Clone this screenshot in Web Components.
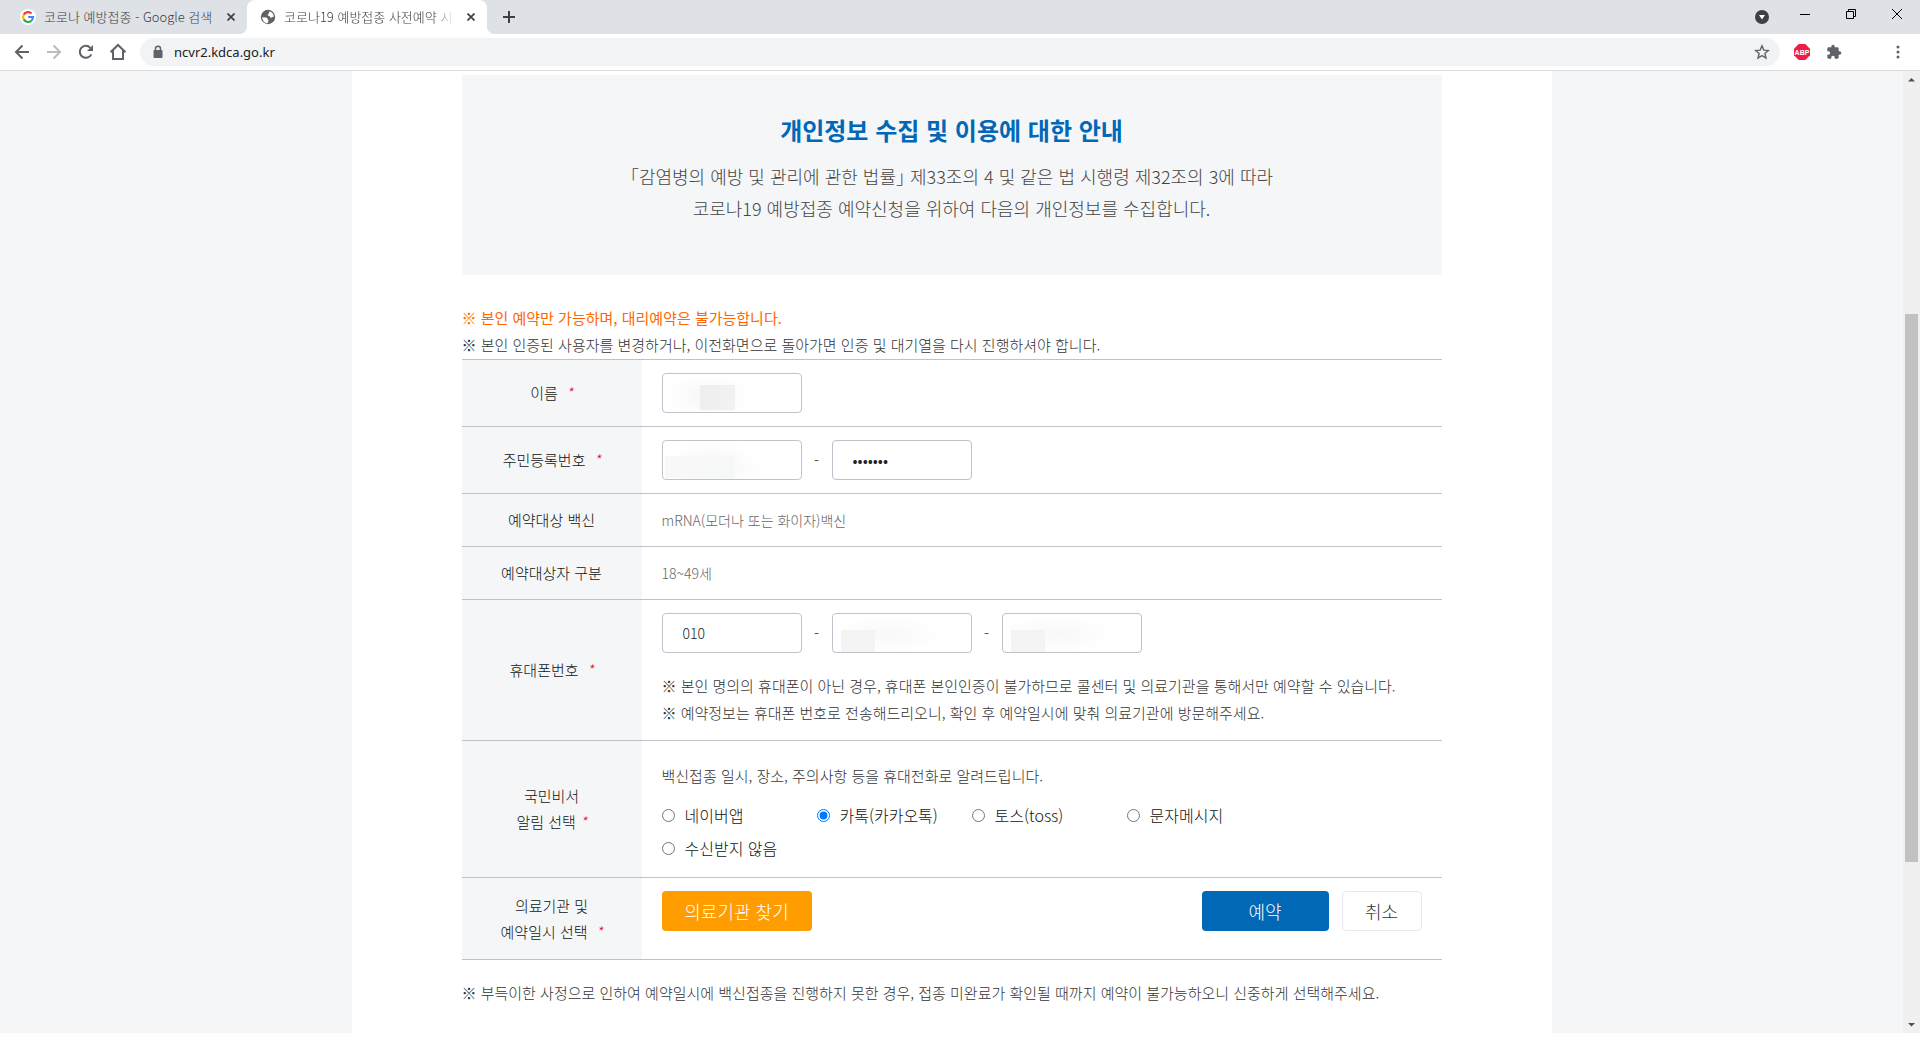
<!DOCTYPE html>
<html lang="ko">
<head>
<meta charset="utf-8">
<title>코로나19 예방접종 사전예약 시스템</title>
<style>
  body {
    margin: 0;
    font-family: "Noto Sans CJK KR", "Noto Sans", sans-serif;
    background: #fff;
  }
</style>
</head>
<body>
<browser-window>
  <browser-tab slot="tab" label="코로나 예방접종 - Google 검색">
    <svg slot="icon" width="16" height="16" viewBox="0 0 16 16">
      <circle cx="8" cy="8" r="8" fill="#fff"/>
      <g fill="none" stroke-width="2.2">
        <path d="M3.7 5.6A5 5 0 0 1 11.6 4.5" stroke="#ea4335"/>
        <path d="M3.7 10.4A5 5 0 0 1 3.7 5.6" stroke="#fbbc05"/>
        <path d="M11.4 11.7A5 5 0 0 1 3.7 10.4" stroke="#34a853"/>
        <path d="M8.2 8H13A5 5 0 0 1 11.4 11.7" stroke="#4285f4"/>
      </g>
    </svg>
  </browser-tab>
  <browser-tab slot="tab" label="코로나19 예방접종 사전예약 시스템" active>
    <svg slot="icon" width="16" height="16" viewBox="0 0 16 16">
      <circle cx="8" cy="8" r="7.2" fill="#5f6368"/>
      <path d="M2.2 8.2 6 8.6c1.3.2 1.8 1 1.6 2 1 .2 1 1.2.6 2.200l-.6 1.500C4.500 14 2.200 11.500 2.200 8.200zM9.300 2.300c2.500.600 4.300 2.600 4.500 5-.8 1.300-1.800.5-2.300 1.200-.6.700-1.500.2-1.600-.7-.1-1-1.300-.6-2-1.200-.5-.5-.2-1.200.4-1.400.9-.3.2-1.200.7-1.700.3-.3.6-.6.300-1.200z" fill="#fff"/>
    </svg>
  </browser-tab>
  <reservation-page>
    <notice-box slot="notice">
      <span slot="title">개인정보 수집 및 이용에 대한 안내</span>
      <span>「감염병의 예방 및 관리에 관한 법률」 제33조의 4 및 같은 법 시행령 제32조의 3에 따라<br>코로나19 예방접종 예약신청을 위하여 다음의 개인정보를 수집합니다.</span>
    </notice-box>
    <note-line slot="before" highlight>※ 본인 예약만 가능하며, 대리예약은 불가능합니다.</note-line>
    <note-line slot="before">※ 본인 인증된 사용자를 변경하거나, 이전화면으로 돌아가면 인증 및 대기열을 다시 진행하셔야 합니다.</note-line>
    <reservation-form></reservation-form>
    <note-line slot="after">※ 부득이한 사정으로 인하여 예약일시에 백신접종을 진행하지 못한 경우, 접종 미완료가 확인될 때까지 예약이 불가능하오니 신중하게 선택해주세요.</note-line>
  </reservation-page>
</browser-window>

<script>
class BrowserTab extends HTMLElement {
  constructor() {
    super();
    this.attachShadow({ mode: 'open' });
    this.shadowRoot.innerHTML = `
      <style>
        :host {
          display: flex;
          align-items: center;
          gap: 8px;
          box-sizing: border-box;
          width: 240px;
          height: 34px;
          padding: 0 8px 0 13px;
          position: relative;
          color: #3c4043;
        }
        :host([active]) {
          background: #fff;
          border-radius: 8px 8px 0 0;
        }
        /* flared feet of the active tab */
        :host([active])::before,
        :host([active])::after {
          content: "";
          position: absolute;
          bottom: 0;
          width: 8px;
          height: 8px;
        }
        :host([active])::before {
          left: -8px;
          background: radial-gradient(circle at 0 0, #dee1e6 8px, #fff 8px);
        }
        :host([active])::after {
          right: -8px;
          background: radial-gradient(circle at 100% 0, #dee1e6 8px, #fff 8px);
        }
        ::slotted(svg) { flex: none; }
        .title {
          flex: 1;
          overflow: hidden;
          white-space: nowrap;
          font-size: 13px;
          line-height: 18px;
          font-weight: 300;
        }
        :host([active]) .title {
          -webkit-mask-image: linear-gradient(to right, #000 88%, transparent);
          mask-image: linear-gradient(to right, #000 88%, transparent);
        }
        button {
          display: flex;
          flex: none;
          padding: 4px;
          border: 0;
          background: none;
        }
      </style>
      <slot name="icon"></slot>
      <span class="title"></span>
      <button type="button" aria-label="탭 닫기">
        <svg width="8" height="8" viewBox="0 0 8 8"><path d="M.5.5l7 7M7.5.5l-7 7" stroke="#3c4043" stroke-width="1.7"/></svg>
      </button>
    `;
  }

  connectedCallback() {
    this.shadowRoot.querySelector('.title').textContent = this.getAttribute('label') || '';
  }
}

class BrowserWindow extends HTMLElement {
  constructor() {
    super();
    this.attachShadow({ mode: 'open' });
    this.shadowRoot.innerHTML = `
      <style>
        :host {
          display: flex;
          flex-direction: column;
          box-sizing: border-box;
          min-height: 100vh;
          padding-bottom: 7px;
        }
        button {
          display: flex;
          align-items: center;
          justify-content: center;
          flex: none;
          width: 32px;
          height: 28px;
          padding: 0;
          border: 0;
          background: none;
        }
        .strip {
          display: flex;
          height: 34px;
          padding-left: 7px;
          background: #dee1e6;
        }
        .strip .new { width: 28px; height: 34px; margin-left: 8px; }
        .system { display: flex; margin-left: auto; }
        .system button { width: 46px; }
        .system .search { width: 40px; height: 34px; }
        .toolbar {
          display: flex;
          align-items: center;
          height: 36px;
          padding: 0 6px;
          border-bottom: 1px solid #d9dbdd;
        }
        .address {
          display: flex;
          align-items: center;
          flex: 1;
          height: 28px;
          margin: 0 6px;
          padding: 0 2px 0 12px;
          border-radius: 14px;
          background: #f1f3f4;
        }
        .address input {
          flex: 1;
          min-width: 0;
          margin-left: 10px;
          padding: 0;
          border: 0;
          outline: 0;
          background: none;
          color: #202124;
          font: 13px/20px "Noto Sans", sans-serif;
        }
        .menu { margin-left: 32px; }
        .view { display: flex; flex: 1; }
        .view ::slotted(reservation-page) { flex: 1; min-width: 0; }
      </style>
      <div class="strip">
        <slot name="tab"></slot>
        <button class="new" type="button" aria-label="새 탭"><svg width="12" height="12" viewBox="0 0 12 12"><path d="M6 0v12M0 6h12" stroke="#3c4043" stroke-width="2"/></svg></button>
        <div class="system">
          <button class="search" type="button" aria-label="탭 검색"><svg width="14" height="14" viewBox="0 0 14 14"><circle cx="7" cy="7" r="7" fill="#3c4043"/><path d="M4 5h6L7 9.500z" fill="#fff"/></svg></button>
          <button type="button" aria-label="최소화"><svg width="10" height="10" viewBox="0 0 10 10"><path d="M0 5.500h10" stroke="#000"/></svg></button>
          <button type="button" aria-label="이전 크기로"><svg width="10" height="10" viewBox="0 0 10 10" fill="none" stroke="#000"><path d="M.5 2.500h7v7h-7zM2.500 2.500v-2h7v7h-2"/></svg></button>
          <button type="button" aria-label="닫기"><svg width="10" height="10" viewBox="0 0 10 10"><path d="M0 0l10 10M10 0L0 10" stroke="#000"/></svg></button>
        </div>
      </div>
      <div class="toolbar">
        <button type="button" aria-label="뒤로"><svg width="16" height="16" viewBox="0 0 16 16" fill="none" stroke="#5f6368" stroke-width="2"><path d="M15 8H2.500M8.500 1.500L2 8l6.500 6.500"/></svg></button>
        <button type="button" aria-label="앞으로"><svg width="16" height="16" viewBox="0 0 16 16" fill="none" stroke="#babcbe" stroke-width="2"><path d="M1 8h12.500M7.500 1.500L14 8l-6.500 6.500"/></svg></button>
        <button type="button" aria-label="새로고침"><svg width="16" height="16" viewBox="0 0 16 16"><path d="M13.300 10.300A6 6 0 1 1 12.300 3.800" fill="none" stroke="#5f6368" stroke-width="2"/><path d="M15 1v6H9z" fill="#5f6368"/></svg></button>
        <button type="button" aria-label="홈"><svg width="18" height="18" viewBox="0 0 18 18"><path d="M1.500 9.200L9 2l7.500 7.200M4 7.500V16h10V7.500" fill="none" stroke="#5f6368" stroke-width="2"/></svg></button>
        <div class="address">
          <svg width="12" height="14" viewBox="0 0 12 14"><path d="M3.500 6V3.700a2.500 2.500 0 0 1 5 0V6" fill="none" stroke="#5f6368" stroke-width="1.500"/><rect x="1.500" y="5" width="9" height="8" rx="1" fill="#5f6368"/></svg>
          <input type="text" value="ncvr2.kdca.go.kr" aria-label="주소창">
          <button type="button" aria-label="북마크"><svg width="16" height="16" viewBox="0 0 16 16"><path d="M8 1.800l1.800 4.300 4.600.4-3.500 3 1.100 4.500L8 11.600 4 14l1.100-4.500-3.500-3 4.600-.4z" fill="none" stroke="#5f6368" stroke-width="1.400"/></svg></button>
        </div>
        <button type="button" aria-label="Adblock Plus"><svg width="16" height="16" viewBox="0 0 16 16"><path d="M4.700 0h6.600L16 4.700v6.600L11.300 16H4.700L0 11.300V4.700z" fill="#ed1e45"/><text x="8" y="10.800" text-anchor="middle" fill="#fff" font-family="Liberation Sans, sans-serif" font-size="7" font-weight="700">ABP</text></svg></button>
        <button type="button" aria-label="확장 프로그램"><svg width="16" height="16" viewBox="0 0 24 24"><path d="M20.500 11H19V7c0-1.100-.9-2-2-2h-4V3.500a2.500 2.500 0 0 0-5 0V5H4c-1.100 0-2 .9-2 2v3.800h1.500a2.700 2.700 0 0 1 0 5.400H2V20c0 1.100.9 2 2 2h3.800v-1.500a2.700 2.700 0 0 1 5.400 0V22H17c1.100 0 2-.9 2-2v-4h1.500a2.500 2.500 0 0 0 0-5z" fill="#5f6368"/></svg></button>
        <button class="menu" type="button" aria-label="메뉴"><svg width="4" height="14" viewBox="0 0 4 14" fill="#5f6368"><circle cx="2" cy="2" r="1.500"/><circle cx="2" cy="7" r="1.500"/><circle cx="2" cy="12" r="1.500"/></svg></button>
      </div>
      <div class="view">
        <slot></slot>
        <page-scrollbar></page-scrollbar>
      </div>
    `;
  }
}

class PageScrollbar extends HTMLElement {
  constructor() {
    super();
    this.attachShadow({ mode: 'open' });
    this.shadowRoot.innerHTML = `
      <style>
        :host {
          display: flex;
          flex-direction: column;
          align-items: center;
          flex: none;
          width: 17px;
          background: #f0f0f0;
        }
        svg { flex: none; }
        .before { flex: 226; }
        .thumb { flex: 548; width: 13px; background: #c1c1c1; }
        .after { flex: 154; }
      </style>
      <svg width="17" height="17" viewBox="0 0 17 17"><path d="M5 10.500L8.500 7l3.500 3.500z" fill="#505050"/></svg>
      <div class="before"></div>
      <div class="thumb"></div>
      <div class="after"></div>
      <svg width="17" height="17" viewBox="0 0 17 17"><path d="M5 7h7l-3.500 3.500z" fill="#505050"/></svg>
    `;
  }
}

class ReservationPage extends HTMLElement {
  constructor() {
    super();
    this.attachShadow({ mode: 'open' });
    this.shadowRoot.innerHTML = `
      <style>
        :host {
          display: flex;
          justify-content: center;
          background: #f4f6f8;
        }
        main {
          box-sizing: border-box;
          width: 100%;
          max-width: 1200px;
          padding: 4px 110px 27px;
          background: #fff;
        }
        .before { padding: 29px 0 1px; }
        .after { margin-top: 19px; }
      </style>
      <main>
        <slot name="notice"></slot>
        <div class="before"><slot name="before"></slot></div>
        <slot></slot>
        <div class="after"><slot name="after"></slot></div>
      </main>
    `;
  }
}

class NoticeBox extends HTMLElement {
  constructor() {
    super();
    this.attachShadow({ mode: 'open' });
    this.shadowRoot.innerHTML = `
      <style>
        :host {
          display: block;
          padding: 37px 20px 51px;
          background: #f4f6f8;
          text-align: center;
        }
        h2 {
          margin: 0 0 12px;
          color: #0068b7;
          font-size: 24px;
          line-height: 36px;
          font-weight: 700;
        }
        p {
          margin: 0;
          color: #444;
          font-size: 18px;
          line-height: 32px;
          font-weight: 300;
          /* half-width corner brackets */
          font-feature-settings: "halt";
        }
      </style>
      <h2><slot name="title"></slot></h2>
      <p><slot></slot></p>
    `;
  }
}

class NoteLine extends HTMLElement {
  constructor() {
    super();
    this.attachShadow({ mode: 'open' });
    this.shadowRoot.innerHTML = `
      <style>
        :host {
          display: block;
          color: #333;
          font-size: 15px;
          line-height: 27px;
          font-weight: 300;
        }
        :host([highlight]) { color: #f60; font-weight: 400; }
      </style>
      <slot></slot>
    `;
  }
}

class ReservationForm extends HTMLElement {
  constructor() {
    super();
    this.attachShadow({ mode: 'open' });
    this.shadowRoot.innerHTML = `
      <style>
        :host { display: block; }
        table {
          width: 100%;
          border-collapse: separate;
          border-spacing: 0;
          border-top: 1px solid #c1c1cb;
          font-size: 15px;
          line-height: 26px;
        }
        th, td {
          padding: 13px 20px;
          border-bottom: 1px solid #c1c1cb;
        }
        th {
          width: 180px;
          box-sizing: border-box;
          padding: 13px 0;
          background: #f4f6f8;
          color: #111;
          font-weight: 300;
        }
        td {
          color: #666;
          font-weight: 300;
          vertical-align: top;
        }
        em { margin-left: 4px; color: #e60012; }
        .fields {
          display: flex;
          align-items: center;
          color: #222;
        }
        .fields span { width: 30px; text-align: center; }
        .fields input {
          box-sizing: border-box;
          width: 140px;
          height: 40px;
          padding: 0 20px;
          border: 1px solid #c1c1cb;
          border-radius: 4px;
          background-color: #fff;
          background-repeat: no-repeat;
          color: #222;
          font: inherit;
          font-size: 14px;
        }
        .fields input[type="password"] { font-size: 16px; }
        /* masked personal data */
        .fields .masked {
          background-image:
            linear-gradient(90deg, #eee, #f2f2f2),
            radial-gradient(closest-side, #f5f7f6, #fff);
          background-position: 37px 11px, 0 0;
          background-size: 35px 25px, 90px 44px;
        }
        .fields .faint {
          background-image:
            linear-gradient(90deg, #f8f8f7, #f6f7f8),
            radial-gradient(closest-side, #f5f6f6, #fff);
          background-position: 2px 15px, 0 0;
          background-size: 70px 22px, 100px 50px;
        }
        .fields .phone {
          background-image:
            linear-gradient(#f3f3f3, #f4f4f4),
            radial-gradient(closest-side, #f8f8f8, #fff);
          background-position: 8px 16px, 0 0;
          background-size: 34px 22px, 110px 40px;
        }
        .notes { padding: 19px 0 1px; }
        .alarm { padding-bottom: 12px; }
        .alarm p {
          margin: 8px 0 10px;
          color: #333;
          line-height: 27px;
        }
        .options {
          display: grid;
          grid-template-columns: repeat(4, 155px);
          color: #111;
          font-size: 16px;
          line-height: 33px;
        }
        .options label {
          display: flex;
          align-items: center;
          gap: 10px;
          white-space: nowrap;
        }
        .options input {
          width: 13px;
          height: 13px;
          margin: 0;
          accent-color: #0075ff;
        }
        .actions { display: flex; gap: 13px; padding-bottom: 15px; }
        button {
          box-sizing: border-box;
          height: 40px;
          padding: 0 22px;
          border: 0;
          border-radius: 4px;
          color: #fff;
          font: inherit;
          font-size: 18px;
        }
        .find { min-width: 150px; margin-right: auto; background: #ff9c00; }
        .reserve { min-width: 127px; background: #0068b7; }
        .cancel {
          min-width: 80px;
          border: 1px solid #e8e8f2;
          background: #fff;
          color: #333;
        }
      </style>
      <form>
        <table>
          <tr>
            <th scope="row"><label for="name">이름 <em>*</em></label></th>
            <td><div class="fields"><input class="masked" id="name" type="text"></div></td>
          </tr>
          <tr>
            <th scope="row"><label for="rrn">주민등록번호 <em>*</em></label></th>
            <td><div class="fields">
              <input class="faint" id="rrn" type="text"><span>-</span><input type="password" value="0000000" autocomplete="off" aria-label="주민등록번호 뒷자리">
            </div></td>
          </tr>
          <tr>
            <th scope="row">예약대상 백신</th>
            <td><small-text>mRNA(모더나 또는 화이자)백신</small-text></td>
          </tr>
          <tr>
            <th scope="row">예약대상자 구분</th>
            <td><small-text>18~49세</small-text></td>
          </tr>
          <tr>
            <th scope="row"><label for="phone">휴대폰번호 <em>*</em></label></th>
            <td>
              <div class="fields">
                <input id="phone" type="text" value="010"><span>-</span><input class="phone" type="text" aria-label="휴대폰 가운데 번호"><span>-</span><input class="phone" type="text" aria-label="휴대폰 끝 번호">
              </div>
              <div class="notes">
                <note-line>※ 본인 명의의 휴대폰이 아닌 경우, 휴대폰 본인인증이 불가하므로 콜센터 및 의료기관을 통해서만 예약할 수 있습니다.</note-line>
                <note-line>※ 예약정보는 휴대폰 번호로 전송해드리오니, 확인 후 예약일시에 맞춰 의료기관에 방문해주세요.</note-line>
              </div>
            </td>
          </tr>
          <tr>
            <th scope="row">국민비서<br>알림 선택<em>*</em></th>
            <td class="alarm">
              <p>백신접종 일시, 장소, 주의사항 등을 휴대전화로 알려드립니다.</p>
              <div class="options">
                <label><input type="radio" name="alarm">네이버앱</label>
                <label><input type="radio" name="alarm" checked>카톡(카카오톡)</label>
                <label><input type="radio" name="alarm">토스(toss)</label>
                <label><input type="radio" name="alarm">문자메시지</label>
                <label><input type="radio" name="alarm">수신받지 않음</label>
              </div>
            </td>
          </tr>
          <tr>
            <th scope="row">의료기관 및<br>예약일시 선택 <em>*</em></th>
            <td><div class="actions">
              <button class="find" type="button">의료기관 찾기</button>
              <button class="reserve" type="button">예약</button>
              <button class="cancel" type="button">취소</button>
            </div></td>
          </tr>
        </table>
      </form>
    `;
  }
}

class SmallText extends HTMLElement {
  constructor() {
    super();
    this.attachShadow({ mode: 'open' });
    this.shadowRoot.innerHTML = `
      <style>
        :host { display: block; font-size: 14px; }
      </style>
      <slot></slot>
    `;
  }
}

customElements.define('browser-tab', BrowserTab);
customElements.define('page-scrollbar', PageScrollbar);
customElements.define('browser-window', BrowserWindow);
customElements.define('notice-box', NoticeBox);
customElements.define('note-line', NoteLine);
customElements.define('small-text', SmallText);
customElements.define('reservation-form', ReservationForm);
customElements.define('reservation-page', ReservationPage);
</script>
</body>
</html>
